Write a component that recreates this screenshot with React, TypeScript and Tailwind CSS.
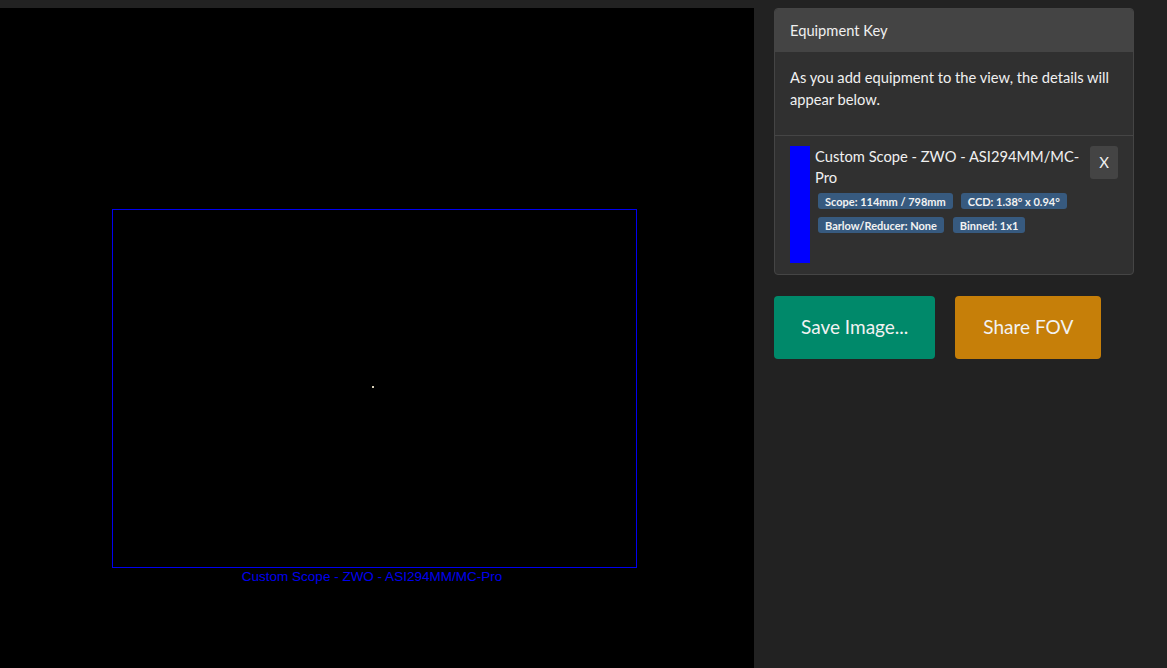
import React from "react";

const badges1 = ["Scope: 114mm / 798mm", "CCD: 1.38° x 0.94°"];
const badges2 = ["Barlow/Reducer: None", "Binned: 1x1"];

function Badge({ text }: { text: string }) {
  return (
    <span className="inline-flex h-[16px] items-center rounded-[3px] bg-[#375a7f] px-[7px] text-[11px] font-bold leading-none text-[#f2f2f2]">
      {text}
    </span>
  );
}

export default function App() {
  return (
    <div
      className="flex h-[668px] w-full flex-col overflow-hidden bg-[#222222]"
      style={{ fontFamily: "Lato, 'Open Sans', sans-serif" }}
    >
      <div className="h-[8px] shrink-0 bg-[#222222]" />
      <div className="flex min-h-0 flex-1">
        {/* Canvas */}
        <div className="relative h-full w-[754px] shrink-0 bg-black">
          <div className="absolute left-[112px] top-[201px] h-[359px] w-[525px] border border-[#0000ee]" />
          <div className="absolute left-[372px] top-[378px] h-[2px] w-[2px] bg-[#d8d0b8]" />
          <div
            className="absolute left-[112px] top-[561px] w-[520px] text-center text-[13.5px] leading-[16px] text-[#0000ee]"
            style={{ fontFamily: "'Liberation Sans', Arial, sans-serif" }}
          >
            Custom Scope - ZWO - ASI294MM/MC-Pro
          </div>
        </div>

        {/* Side panel */}
        <div className="flex flex-1 flex-col pl-[20px]">
          <div className="w-[360px] overflow-hidden rounded-[4px] border border-[#454545] bg-[#303030] text-[14.7px] text-[#f0f0f0]">
            <div className="flex h-[43px] items-center bg-[#444444] px-[15px] leading-none">
              Equipment Key
            </div>
            <div className="px-[15px] pb-[25px] pt-[14px] leading-[22px]">
              As you add equipment to the view, the details will appear below.
            </div>
            <div className="flex border-t border-[#454545] pb-[11px] pl-[15px] pr-[15px] pt-[10px]">
              <div className="h-[117px] w-[20px] shrink-0 bg-[#0000ff]" />
              <div className="ml-[5px] flex-1">
                <div className="leading-[21px]">
                  Custom Scope - ZWO - ASI294MM/MC-Pro
                </div>
                <div className="ml-[3px] mt-[5px] flex flex-col gap-[8px]">
                  <div className="flex gap-[8px]">
                    {badges1.map((b) => (
                      <Badge key={b} text={b} />
                    ))}
                  </div>
                  <div className="flex gap-[9px]">
                    {badges2.map((b) => (
                      <Badge key={b} text={b} />
                    ))}
                  </div>
                </div>
              </div>
              <button className="ml-[2px] flex h-[33px] w-[28px] shrink-0 items-center justify-center rounded-[3px] bg-[#444444] text-[15px] text-[#f0f0f0]">
                X
              </button>
            </div>
          </div>

          <div className="mt-[21px] flex gap-[20px]">
            <button className="flex h-[63px] items-center rounded-[4px] bg-[#00896a] px-[27px] text-[19px] text-[#f2f2f2]">
              Save Image...
            </button>
            <button className="flex h-[63px] items-center rounded-[4px] bg-[#c67f09] px-[28px] text-[19px] text-[#f2f2f2]">
              Share FOV
            </button>
          </div>
        </div>
      </div>
    </div>
  );
}
